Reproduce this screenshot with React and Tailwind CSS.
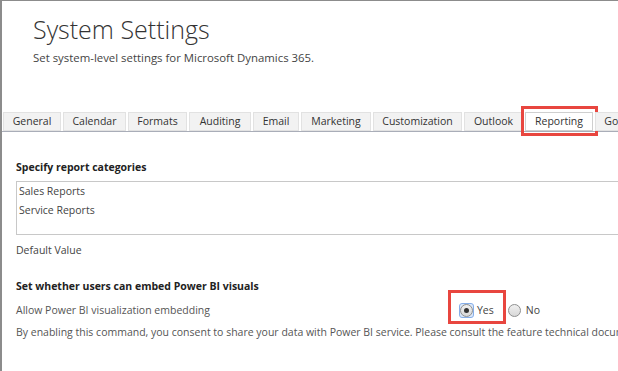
import React from 'react';

const tabs = [
  { label: 'General', w: 'w-[58px]' },
  { label: 'Calendar', w: 'w-[63px]' },
  { label: 'Formats', w: 'w-[59px]' },
  { label: 'Auditing', w: 'w-[62px]' },
  { label: 'Email', w: 'w-[46px]' },
  { label: 'Marketing', w: 'w-[70px]' },
  { label: 'Customization', w: 'w-[89px]' },
  { label: 'Outlook', w: 'w-[59px]' },
  { label: 'Reporting', w: 'w-[68px]', active: true },
  { label: 'Goals', w: 'w-[46px]' },
];

const Radio = ({ checked }) => (
  <span className="flex h-[13px] w-[13px] items-center justify-center rounded-full border border-[#8e8f8f] bg-gradient-to-b from-[#f0f0f0] to-[#d8d8d8]">
    {checked && <span className="h-[5px] w-[5px] rounded-full bg-[#333]" />}
  </span>
);

const App = () => {
  return (
    <div
      className="relative h-[371px] w-[618px] overflow-hidden border-l-2 border-t border-[#8c8c8c] bg-white"
      style={{ fontFamily: '"Open Sans", "Noto Sans", sans-serif' }}
    >
      {/* header */}
      <div className="pl-[31px] pt-[16px]">
        <h1 className="text-[25px] font-light leading-[25px] text-[#333]">System Settings</h1>
        <p className="mt-[8px] text-[11.4px] leading-[16px] text-[#444]">
          Set system-level settings for Microsoft Dynamics 365.
        </p>
      </div>

      {/* tabs */}
      <div className="mt-[46px] flex gap-[2px] border-b border-[#a9adb8] pl-[1px]">
        {tabs.map((tab) => (
          <div
            key={tab.label}
            className={`relative flex h-[19px] shrink-0 items-center justify-center overflow-visible whitespace-nowrap border text-[10.5px] text-[#333] ${tab.w} ${
              tab.active ? 'border-[#cfcfcf] bg-white' : 'border-[#e2e2e2] bg-[#f2f2f2]'
            }`}
          >
            {tab.label}
            {tab.active && (
              <span className="absolute -bottom-[6px] -left-[5px] -right-[6px] -top-[7px] border-[3px] border-[#e8463f]" />
            )}
          </div>
        ))}
      </div>

      {/* content */}
      <div className="pl-[14px] text-[10.5px] leading-[16px]">
        <h2 className="mt-[27px] font-bold text-[#222]">Specify report categories</h2>
        <div className="mt-[6px] h-[54px] w-[640px] border border-[#c8c8c8] pl-[2px] leading-[19px] text-[#444]">
          <div>Sales Reports</div>
          <div>Service Reports</div>
        </div>
        <div className="mt-[7px] text-[#444]">Default Value</div>

        <h2 className="mt-[20px] font-bold text-[#222]">Set whether users can embed Power BI visuals</h2>
        <div className="mt-[8px] flex h-[16px] items-center text-[#555]">
          <span className="w-[443px] shrink-0">Allow Power BI visualization embedding</span>
          <label className="relative flex items-center">
            <span className="flex h-[15px] w-[15px] items-center justify-center rounded-[3px] border border-[#86aee8] bg-[#dbe8fa]">
              <Radio checked />
            </span>
            <span className="ml-[3px] text-[#444]">Yes</span>
            <span className="absolute -bottom-[6px] -left-[11px] -right-[12px] -top-[12px] border-[3px] border-[#e8463f]" />
          </label>
          <label className="ml-[14px] flex items-center">
            <Radio />
            <span className="ml-[5px] text-[#444]">No</span>
          </label>
        </div>
        <p className="mt-[6px] whitespace-nowrap text-[#555]">
          By enabling this command, you consent to share your data with Power BI service. Please consult the feature technical documentation for more information.
        </p>
      </div>
    </div>
  );
};

export default App;
